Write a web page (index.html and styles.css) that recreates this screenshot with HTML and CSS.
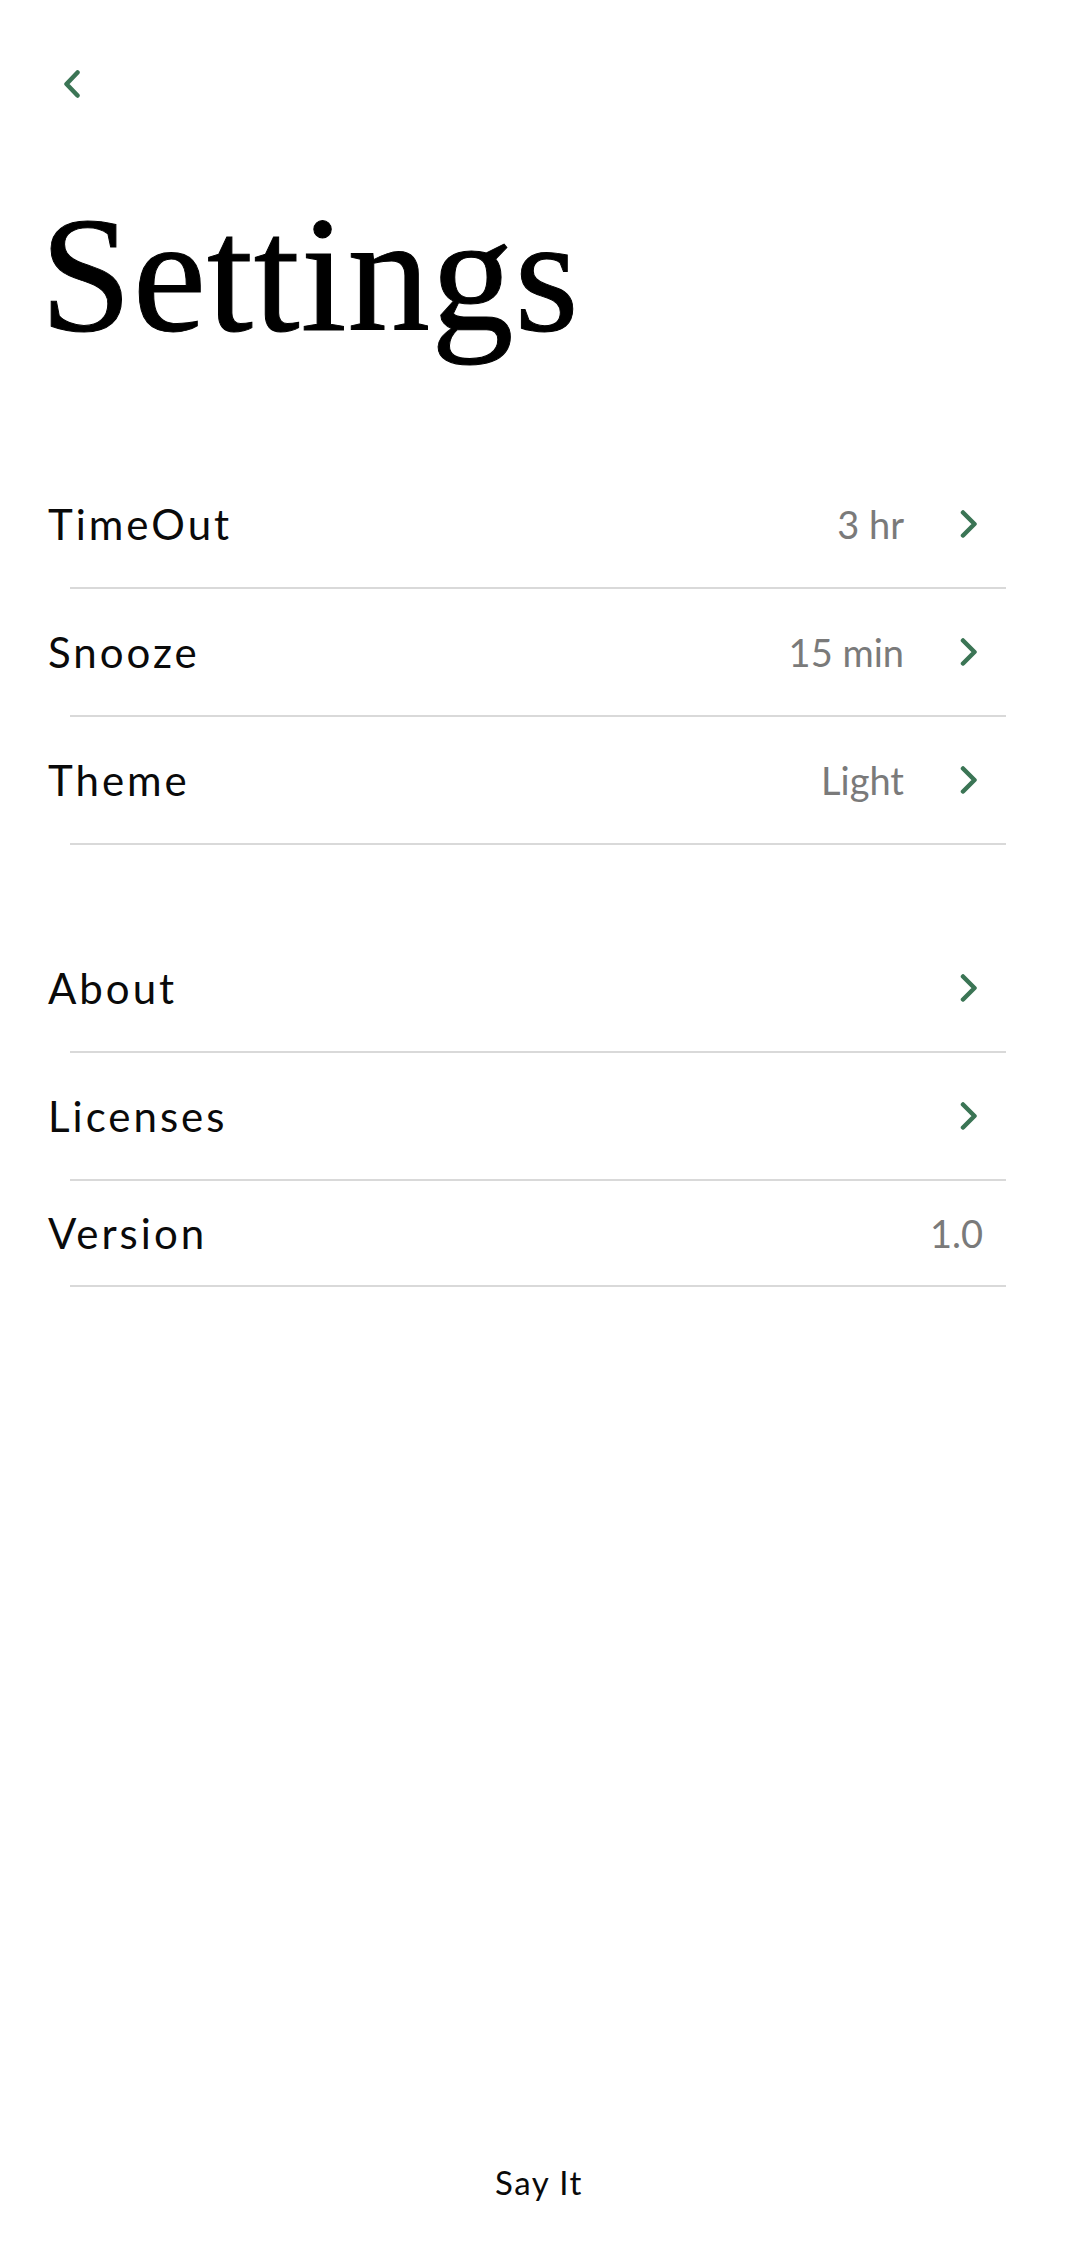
FILE: index.html
```html
<!DOCTYPE html>
<html lang="en">
<head>
<meta charset="utf-8">
<title>Settings</title>
<link rel="stylesheet" href="styles.css">
</head>
<body>
<div class="page">
  <header class="topbar">
    <button class="back" aria-label="Back">
      <svg class="back-icon" width="18" height="28" viewBox="0 0 18 28"><path d="M14.5 2.5 L3.5 14 L14.5 25.5" /></svg>
    </button>
  </header>
  <h1 class="title">Settings</h1>

  <section class="group">
    <div class="row">
      <span class="label">TimeOut</span>
      <span class="value">3 hr</span>
      <svg class="chev" width="18" height="28" viewBox="0 0 18 28"><path d="M3 2.5 L14.5 14 L3 25.5" /></svg>
    </div>
    <div class="rule"></div>
    <div class="row">
      <span class="label">Snooze</span>
      <span class="value">15 min</span>
      <svg class="chev" width="18" height="28" viewBox="0 0 18 28"><path d="M3 2.5 L14.5 14 L3 25.5" /></svg>
    </div>
    <div class="rule"></div>
    <div class="row">
      <span class="label">Theme</span>
      <span class="value">Light</span>
      <svg class="chev" width="18" height="28" viewBox="0 0 18 28"><path d="M3 2.5 L14.5 14 L3 25.5" /></svg>
    </div>
    <div class="rule"></div>
  </section>

  <section class="group group-second">
    <div class="row">
      <span class="label">About</span>
      <svg class="chev" width="18" height="28" viewBox="0 0 18 28"><path d="M3 2.5 L14.5 14 L3 25.5" /></svg>
    </div>
    <div class="rule"></div>
    <div class="row">
      <span class="label">Licenses</span>
      <svg class="chev" width="18" height="28" viewBox="0 0 18 28"><path d="M3 2.5 L14.5 14 L3 25.5" /></svg>
    </div>
    <div class="rule"></div>
    <div class="row row-short">
      <span class="label">Version</span>
      <span class="value value-end">1.0</span>
    </div>
    <div class="rule"></div>
  </section>

  <footer class="footer">Say It</footer>
</div>
</body>
</html>
```

FILE: styles.css
```css
* { box-sizing: border-box; }

html, body {
  margin: 0;
  padding: 0;
  background: #ffffff;
}

.page {
  min-height: 2252px;
  display: flex;
  flex-direction: column;
  font-family: "Lato", "Open Sans", sans-serif;
  color: #0a0a0a;
}

.topbar {
  padding: 70px 0 0 63px;
  height: 99px;
}

.back {
  display: block;
  padding: 0;
  margin: 0;
  border: 0;
  background: none;
  width: 18px;
  height: 28px;
  cursor: pointer;
}

.back-icon path,
.chev path {
  fill: none;
  stroke: #3b7555;
  stroke-width: 4.5;
  stroke-linecap: round;
  stroke-linejoin: round;
}

.back-icon, .chev { display: block; }

.title {
  margin: 93px 0 0 40px;
  font-family: "Liberation Serif", "Times New Roman", serif;
  font-weight: 400;
  font-size: 165px;
  line-height: 165px;
  height: 165px;
  color: #000;
  letter-spacing: 1px;
  -webkit-text-stroke: 1px #000;
}

.group {
  margin-top: 104px;
  display: flex;
  flex-direction: column;
}

.group-second {
  margin-top: 80px;
}

.row {
  height: 126px;
  display: flex;
  align-items: center;
  padding: 0 100px 0 48px;
}

.row-short {
  height: 104px;
  padding-right: 95px;
}

.label {
  flex: 1;
  font-size: 42px;
  letter-spacing: 3px;
  color: #0a0a0a;
}

.value {
  font-size: 38px;
  color: #7a7a7a;
  margin-right: 56px;
}

.value-end {
  margin-right: 0;
}

.rule {
  height: 2px;
  background: #d9d9d9;
  margin: 0 72px 0 70px;
}

.footer {
  margin-top: auto;
  padding-bottom: 50px;
  text-align: center;
  font-size: 33px;
  letter-spacing: 1.5px;
  color: #0a0a0a;
}
```
